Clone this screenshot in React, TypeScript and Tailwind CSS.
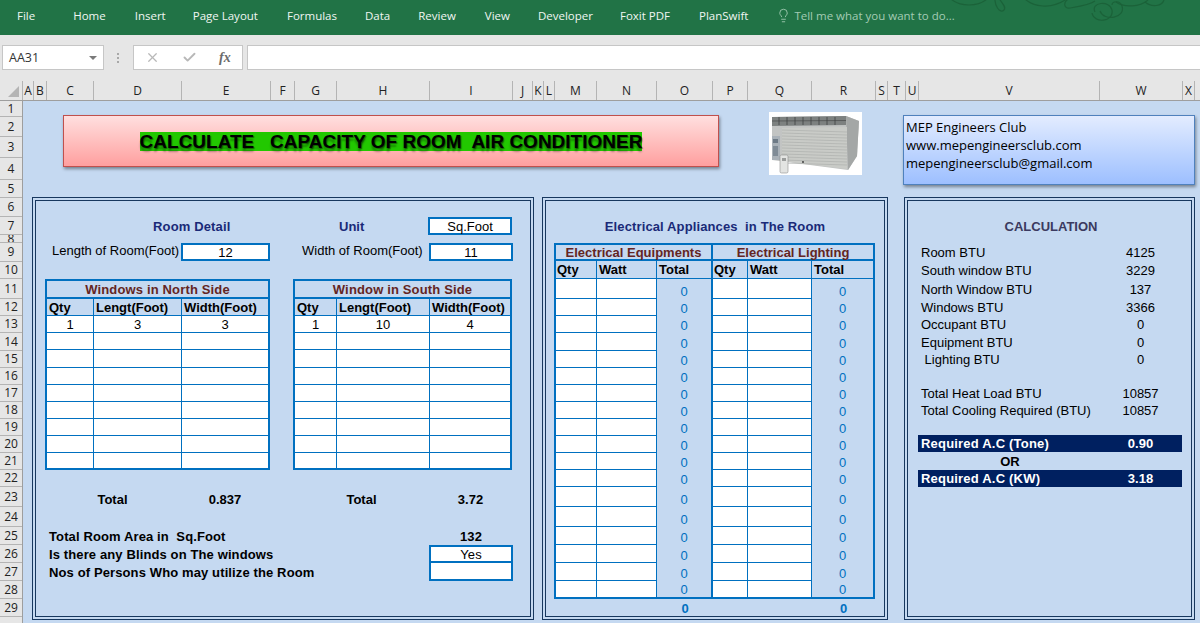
import { Check, Lightbulb, X } from "lucide-react";

const tabs = [
  { label: "Home", cls: "ml-[38px]" },
  { label: "Insert", cls: "ml-[29px]" },
  { label: "Page Layout", cls: "ml-[27px]" },
  { label: "Formulas", cls: "ml-[29px]" },
  { label: "Data", cls: "ml-[28px]" },
  { label: "Review", cls: "ml-[28px]" },
  { label: "View", cls: "ml-[29px]" },
  { label: "Developer", cls: "ml-[28px]" },
  { label: "Foxit PDF", cls: "ml-[27px]" },
  { label: "PlanSwift", cls: "ml-[29px]" },
];

const columns = "ABCDEFGHIJKLMNOPQRSTUVWX".split("");

// rows 1-29, heights as read off the sheet
const rowHeaders = [
  { n: 1, h: "h-[16px]" }, { n: 2, h: "h-[20px]" }, { n: 3, h: "h-[21px]" }, { n: 4, h: "h-[22px]" },
  { n: 5, h: "h-[18px]" }, { n: 6, h: "h-[19px]" }, { n: 7, h: "h-[18px]" }, { n: 8, h: "h-[8px]" },
  { n: 9, h: "h-[19px]" }, { n: 10, h: "h-[17px]" }, { n: 11, h: "h-[20px]" }, { n: 12, h: "h-[17px]" },
  { n: 13, h: "h-[17px]" }, { n: 14, h: "h-[18px]" }, { n: 15, h: "h-[17px]" }, { n: 16, h: "h-[17px]" },
  { n: 17, h: "h-[17px]" }, { n: 18, h: "h-[17px]" }, { n: 19, h: "h-[17px]" }, { n: 20, h: "h-[17px]" },
  { n: 21, h: "h-[17px]" }, { n: 22, h: "h-[17px]" }, { n: 23, h: "h-[20px]" }, { n: 24, h: "h-[20px]" },
  { n: 25, h: "h-[18px]" }, { n: 26, h: "h-[18px]" }, { n: 27, h: "h-[18px]" }, { n: 28, h: "h-[18px]" },
  { n: 29, h: "h-[18px]" },
];

const line = "border-[#0070c0]";
const panel = "h-full border-[4px] border-double border-[#17375e]";

function WindowTable({
  title,
  cols,
  values,
  heads,
}: {
  title: string;
  cols: string;
  values: string[];
  heads: string[];
}) {
  return (
    <div className={`grid ${cols} grid-rows-[18px_17px_17px_17px_18px_17px_17px_17px_17px_17px_15px] border-2 ${line}`}>
      <div className={`col-span-3 flex items-center justify-center border-b-2 ${line} font-bold tracking-[0.15px] text-[#632523]`}>
        {title}
      </div>
      {heads.map((h, i) => (
        <div
          key={h}
          className={`flex items-center border-b ${line} pl-[2px] font-bold whitespace-nowrap ${i < 2 ? "border-r" : ""}`}
        >
          {h}
        </div>
      ))}
      {Array.from({ length: 9 }).map((_, r) =>
        [0, 1, 2].map((c) => (
          <div
            key={`${r}-${c}`}
            className={`flex items-center justify-center bg-white ${line} ${c < 2 ? "border-r" : ""} ${r < 8 ? "border-b" : ""}`}
          >
            {r === 0 ? values[c] : ""}
          </div>
        ))
      )}
    </div>
  );
}

function RoomPanel() {
  return (
    <div className={`${panel} w-[502px] pt-[16px] pl-[9px]`}>
      <div className="flex h-[18px] items-center">
        <div className="w-[294px] pl-[108px] font-bold tracking-[0.15px] text-[#1a2a78]">Room Detail</div>
        <div className="w-[89px] font-bold text-[#1a2a78]">Unit</div>
        <div className={`flex h-[18px] w-[84px] items-center justify-center border-2 ${line} bg-white`}>Sq.Foot</div>
      </div>
      <div className="mt-[8px] flex h-[19px] items-start">
        <div className="w-[136px] pl-[7px] whitespace-nowrap">Length of Room(Foot)</div>
        <div className={`flex h-[18px] w-[89px] items-center justify-center border-2 ${line} bg-white`}>12</div>
        <div className="w-[159px] pl-[32px] whitespace-nowrap">Width of Room(Foot)</div>
        <div className={`flex h-[18px] w-[84px] items-center justify-center border-2 ${line} bg-white`}>11</div>
      </div>
      <div className="mt-[17px] flex gap-[23px]">
        <div className="w-[225px]">
          <WindowTable
            title="Windows in North Side"
            cols="grid-cols-[47px_88px_1fr]"
            heads={["Qty", "Lengt(Foot)", "Width(Foot)"]}
            values={["1", "3", "3"]}
          />
        </div>
        <div className="w-[219px]">
          <WindowTable
            title="Window in South Side"
            cols="grid-cols-[42px_93px_1fr]"
            heads={["Qty", "Lengt(Foot)", "Width(Foot)"]}
            values={["1", "10", "4"]}
          />
        </div>
      </div>
      <div className="mt-[17px] grid h-[20px] grid-cols-[135px_90px_24px_135px_83px] items-end font-bold">
        <div className="text-center">Total</div>
        <div className="text-center">0.837</div>
        <div />
        <div className="text-center">Total</div>
        <div className="text-center">3.72</div>
      </div>
      <div className="mt-[20px] grid w-[468px] grid-cols-[384px_84px] grid-rows-[18px_18px_18px] font-bold tracking-[0.12px]">
        <div className="flex items-center pl-[4px] whitespace-pre">Total Room Area in  Sq.Foot</div>
        <div className="flex items-center justify-center">132</div>
        <div className="flex items-center pl-[4px]">Is there any Blinds on The windows</div>
        <div className={`flex items-center justify-center border-2 ${line} bg-white font-normal`}>Yes</div>
        <div className="flex items-center pl-[4px]">Nos of Persons Who may utilize the Room</div>
        <div className={`border-2 border-t-0 ${line} bg-white`} />
      </div>
    </div>
  );
}

const applianceRows = Array.from({ length: 18 }).map((_, i) => i);

function AppliancesPanel() {
  return (
    <div className={`${panel} ml-[8px] w-[346px] pt-[16px] pl-[8px]`}>
      <div className="flex h-[18px] w-[322px] items-center justify-center font-bold tracking-[0.12px] whitespace-pre text-[#1a2a78]">
        Electrical Appliances  in The Room
      </div>
      <div
        className={`mt-[8px] grid w-[321px] grid-cols-[41px_60px_56px_35px_64px_61px] grid-rows-[16px_18px_20px_17px_17px_18px_17px_17px_17px_17px_17px_17px_17px_17px_20px_20px_18px_18px_18px_16px] border-2 ${line}`}
      >
        <div className={`col-span-3 flex items-center justify-center border-r-2 border-b-2 ${line} font-bold text-[#632523]`}>
          Electrical Equipments
        </div>
        <div className={`col-span-3 flex items-center justify-center border-b-2 ${line} font-bold text-[#632523]`}>
          Electrical Lighting
        </div>
        <div className={`flex items-center border-r border-b pl-[1px] ${line} font-bold`}>Qty</div>
        <div className={`flex items-center border-r border-b pl-[2px] ${line} font-bold`}>Watt</div>
        <div className={`flex items-center border-r-2 border-b pl-[2px] ${line} font-bold`}>Total</div>
        <div className={`flex items-center border-r border-b pl-[1px] ${line} font-bold`}>Qty</div>
        <div className={`flex items-center border-r border-b pl-[2px] ${line} font-bold`}>Watt</div>
        <div className={`flex items-center border-b pl-[2px] ${line} font-bold`}>Total</div>
        {applianceRows.map((r) => (
          <div key={r} className="contents">
            <div className={`border-r bg-white ${line} ${r < 17 ? "border-b" : ""}`} />
            <div className={`border-r bg-white ${line} ${r < 17 ? "border-b" : ""}`} />
            <div className={`flex items-end justify-center border-r-2 text-[#0070c0] ${line}`}>0</div>
            <div className={`border-r bg-white ${line} ${r < 17 ? "border-b" : ""}`} />
            <div className={`border-r bg-white ${line} ${r < 17 ? "border-b" : ""}`} />
            <div className="flex items-end justify-center text-[#0070c0]">0</div>
          </div>
        ))}
      </div>
      <div className="grid h-[18px] w-[321px] grid-cols-[103px_56px_99px_63px] items-center font-bold text-[#0070c0]">
        <div />
        <div className="text-center">0</div>
        <div />
        <div className="text-center">0</div>
      </div>
    </div>
  );
}

const calcRows = [
  { label: "Room BTU", value: "4125" },
  { label: "South window BTU", value: "3229" },
  { label: "North Window BTU", value: "137" },
  { label: "Windows BTU", value: "3366" },
  { label: "Occupant BTU", value: "0" },
  { label: "Equipment BTU", value: "0" },
  { label: " Lighting BTU", value: "0" },
  { label: "", value: "" },
  { label: "Total Heat Load BTU", value: "10857" },
  { label: "Total Cooling Required (BTU)", value: "10857" },
  { label: "", value: "" },
];

function CalculationPanel() {
  return (
    <div className={`${panel} ml-[16px] w-[291px] pt-[16px] pl-[10px]`}>
      <div className="flex h-[18px] w-[266px] items-center justify-center font-bold text-[#3b3a60]">CALCULATION</div>
      <div className="mt-[8px] grid w-[264px] grid-cols-[181px_83px] grid-rows-[19px_17px_20px_17px_17px_18px_17px_17px_17px_17px_16px_17px_18px_17px]">
        {calcRows.map((row, i) => (
          <div key={i} className="contents">
            <div className="flex items-center pl-[3px] whitespace-pre">{row.label}</div>
            <div className="flex items-center justify-center">{row.value}</div>
          </div>
        ))}
        <div className="flex items-center bg-[#002060] pl-[3px] font-bold tracking-[0.2px] text-white">Required A.C (Tone)</div>
        <div className="flex items-center justify-center bg-[#002060] font-bold text-white">0.90</div>
        <div className="flex items-center justify-center pl-[3px] font-bold">OR</div>
        <div />
        <div className="flex items-center bg-[#002060] pl-[3px] font-bold tracking-[0.2px] text-white">Required A.C (KW)</div>
        <div className="flex items-center justify-center bg-[#002060] font-bold text-white">3.18</div>
      </div>
    </div>
  );
}

function AirConditioner() {
  return (
    <svg viewBox="0 0 93 63" className="-mt-[3px] ml-[50px] h-[63px] w-[93px] shrink-0 bg-white">
      <polygon points="3,5 77,4 90,9 88,44 79,58 3,48" fill="#c2c4c3" />
      <polygon points="77,4 90,9 88,44 79,58" fill="#a4a7a6" />
      <polygon points="3,5 77,4 77,13 3,14" fill="#7d8180" />
      <polygon points="13,16 78,15 78,57 13,49" fill="#c9cbc7" />
      {[18, 21, 24, 27, 30, 33, 36, 39, 42, 45, 48, 51].map((y) => (
        <line key={y} x1="13" y1={y} x2="78" y2={y + 2} stroke="#aeb0ad" strokeWidth="0.7" />
      ))}
      {[10, 18, 26, 34, 42, 50, 58, 66].map((x) => (
        <line key={x} x1={x} y1="5" x2={x} y2="13" stroke="#3f4241" strokeWidth="0.8" />
      ))}
      <line x1="3" y1="9" x2="77" y2="8.5" stroke="#3f4241" strokeWidth="0.6" />
      <rect x="3" y="24" width="8" height="24" fill="#a9b1b8" />
      <rect x="4" y="27" width="5" height="4" fill="#6d7a86" />
      <rect x="4" y="34" width="5" height="10" fill="#7f8b96" />
      <rect x="11" y="43" width="8" height="18" rx="1.5" fill="#e3e4e2" stroke="#8d8f8e" strokeWidth="0.6" />
      <rect x="13" y="46" width="4" height="3" fill="#9a9c9b" />
      <circle cx="34" cy="50" r="0.9" fill="#333" />
    </svg>
  );
}

function Swirls() {
  return (
    <svg viewBox="0 0 240 35" className="absolute top-0 right-[20px] h-[35px] w-[240px]" fill="none" stroke="#1b6239" strokeWidth="1.2">
      <path d="M8 -4 C18 8 40 8 50 -4" />
      <path d="M55 -4 C54 6 60 14 64 10 C67 6 60 2 58 -4" />
      <path d="M82 -4 C92 8 112 10 128 -2" />
      <path d="M130 -2 C122 2 124 9 130 8 C136 7 150 5 155 1" />
      <path d="M155 12 C150 2 170 0 172 10 C174 22 154 24 152 13" />
      <path d="M160 11 C164 22 186 18 182 6 C180 0 172 1 172 5" />
      <path d="M176 2 C184 8 200 7 208 0" />
      <path d="M205 2 C212 8 222 6 224 0" />
    </svg>
  );
}

export default function App() {
  return (
    <div className="h-[623px] w-[1200px] overflow-hidden bg-[#c5d9f1] font-['Liberation_Sans',Arial,sans-serif] text-[13px] leading-[15px] text-black">
      {/* ribbon */}
      <div className="relative flex h-[35px] items-center bg-[#217346] pb-[5px] font-['Open_Sans',sans-serif] text-[11.5px] text-[#f0f6f2]">
        <Swirls />
        <span className="ml-[17px]">File</span>
        {tabs.map((t) => (
          <span key={t.label} className={t.cls}>
            {t.label}
          </span>
        ))}
        <Lightbulb className="ml-[28px] h-[15px] w-[15px] text-[#a3cbb4]" strokeWidth={1.4} />
        <span className="ml-[3px] text-[#a3cbb4]">Tell me what you want to do...</span>
      </div>

      {/* formula bar */}
      <div className="flex h-[46px] items-start bg-[#e6e6e6] pt-[10px] font-['Open_Sans',sans-serif]">
        <div className="ml-[2px] flex h-[25px] w-[102px] items-center justify-between border border-[#c6c6c6] bg-white pr-[6px] pl-[6px] text-[12.5px] text-[#333]">
          <span>AA31</span>
          <span className="h-0 w-0 border-x-[4px] border-t-[4px] border-x-transparent border-t-[#7a7a7a]" />
        </div>
        <div className="ml-[13px] flex h-[25px] w-[3px] flex-col justify-center gap-[2px]">
          <span className="h-[2px] w-[2px] bg-[#a8a8a8]" />
          <span className="h-[2px] w-[2px] bg-[#a8a8a8]" />
          <span className="h-[2px] w-[2px] bg-[#a8a8a8]" />
        </div>
        <div className="ml-[13px] flex h-[25px] w-[110px] items-center border border-[#c6c6c6] bg-white pl-[11px]">
          <X className="h-[15px] w-[15px] text-[#b8b8b8]" strokeWidth={2} />
          <Check className="ml-[22px] h-[15px] w-[15px] text-[#b8b8b8]" strokeWidth={3} />
          <span className="ml-[22px] font-['Liberation_Serif',serif] text-[14px] font-semibold text-[#6b6b6b] italic">fx</span>
        </div>
        <div className="ml-[4px] h-[25px] flex-1 border border-r-0 border-[#c6c6c6] bg-white" />
      </div>

      {/* column letters */}
      <div className="flex h-[20px] border-b border-[#9e9e9e] bg-[#e6e6e6] font-['Open_Sans',sans-serif] text-[12px] text-[#222]">
        <div className="flex h-full w-[23px] items-end justify-end border-r border-[#b4b4b4] pr-[3px] pb-[3px]">
          <span className="h-0 w-0 border-b-[11px] border-l-[11px] border-b-[#b4b4b4] border-l-transparent" />
        </div>
        <div className="grid flex-1 grid-cols-[11px_13px_47px_88px_89px_24px_42px_93px_83px_20px_11px_11px_42px_60px_56px_35px_64px_64px_12px_18px_13px_181px_83px_12px]">
          {columns.map((c) => (
            <div key={c} className="flex items-center justify-center border-r border-[#b4b4b4]">
              {c}
            </div>
          ))}
        </div>
      </div>

      <div className="flex h-[522px]">
        {/* row numbers */}
        <div className="w-[23px] shrink-0 border-r border-[#9e9e9e] bg-[#e6e6e6] font-['Open_Sans',sans-serif] text-[12px] leading-[16px] text-[#222]">
          {rowHeaders.map((r) => (
            <div key={r.n} className={`flex items-center justify-center overflow-hidden border-b border-[#b4b4b4] ${r.h}`}>
              {r.n}
            </div>
          ))}
        </div>

        {/* sheet */}
        <div className="flex-1 pt-[14px] pl-[9px]">
          <div className="flex h-[82px] items-start">
            <div className="ml-[31px] flex h-[52px] w-[656px] shrink-0 items-center justify-center border border-[#c0504d] bg-gradient-to-b from-[#ffdfdf] to-[#ff9f9f] shadow-[1px_2px_3px_rgba(0,0,0,0.4)]">
              <span className="bg-[#22c800] text-[19px] leading-[19px] font-bold whitespace-pre [text-shadow:1px_1px_1px_rgba(0,0,0,0.45),0_4px_2px_rgba(0,0,0,0.3)]">
                CALCULATE   CAPACITY OF ROOM  AIR CONDITIONER
              </span>
            </div>
            <AirConditioner />
            <div className="ml-[41px] h-[70px] w-[292px] shrink-0 border border-[#4f81bd] bg-gradient-to-b from-[#e3ecff] to-[#9dbfff] pt-[2px] pl-[2px] font-['Open_Sans',sans-serif] text-[13px] leading-[18px] shadow-[1px_2px_3px_rgba(0,0,0,0.4)]">
              <div>MEP Engineers Club</div>
              <div>www.mepengineersclub.com</div>
              <div>mepengineersclub@gmail.com</div>
            </div>
          </div>
          <div className="flex h-[423px]">
            <RoomPanel />
            <AppliancesPanel />
            <CalculationPanel />
          </div>
        </div>
      </div>
    </div>
  );
}
